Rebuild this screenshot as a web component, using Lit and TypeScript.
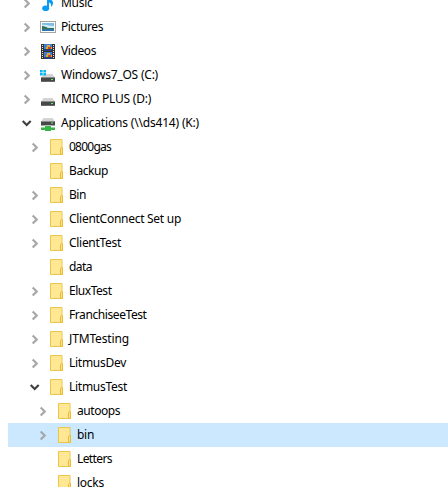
import { LitElement, html, css, svg, nothing } from "lit";
import { customElement, property } from "lit/decorators.js";
import { classMap } from "lit/directives/class-map.js";

type Kind = "music" | "pictures" | "videos" | "system" | "drive" | "network" | "folder";
interface Item {
  label: string;
  kind: Kind;
  depth: number;
  state: "closed" | "open" | "leaf";
  width: number;
  selected?: boolean;
}

const item = (label: string, width: number, depth = 1, state: Item["state"] = "closed", kind: Kind = "folder", selected = false): Item =>
  ({ label, width, depth, state, kind, selected });

const ITEMS: Item[] = [
  item("Music", 31.5, 0, "closed", "music"),
  item("Pictures", 42, 0, "closed", "pictures"),
  item("Videos", 35, 0, "closed", "videos"),
  item("Windows7_OS (C:)", 97, 0, "closed", "system"),
  item("MICRO PLUS (D:)", 90, 0, "closed", "drive"),
  item("Applications (\\\\ds414) (K:)", 138, 0, "open", "network"),
  item("0800gas", 42),
  item("Backup", 39, 1, "leaf"),
  item("Bin", 17),
  item("ClientConnect Set up", 112),
  item("ClientTest", 52),
  item("data", 23, 1, "leaf"),
  item("EluxTest", 42.5),
  item("FranchiseeTest", 77.5),
  item("JTMTesting", 60),
  item("LitmusDev", 57),
  item("LitmusTest", 58, 1, "open"),
  item("autoops", 43, 2),
  item("bin", 17, 2, "closed", "folder", true),
  item("Letters", 35, 2, "leaf"),
  item("locks", 27, 2, "leaf"),
];

const FONT = '12px "Noto Sans"';
const pen = document.createElement("canvas").getContext("2d")!;

// Letter spacing that brings a label to its column width.
function tracking(label: string, width: number): number {
  pen.font = FONT;
  return (width - pen.measureText(label).width) / label.length;
}

const drive = svg`
  <path d="M3.500 7h9L15 11H1z" fill="#d4d4d4"/>
  <path d="M1 10.500h14v4.500H1z" fill="#484848"/>
  <path d="M1 10h14v1H1z" fill="#8b8b8b"/>
  <path d="M1 14h14v1H1z" fill="#6b6b6b"/>
  <path d="M11 12h2v1h-2z" fill="#5df07b"/>`;

const ICONS: Record<Kind, unknown> = {
  music: svg`
    <path d="M7 1h2c0 3 4.500 4 4 7.500c-.2 1.500-1 2.500-2 3.500c.5-3-.5-4-2-4.500V13H7z" fill="#0a9cf5"/>
    <ellipse cx="5.700" cy="13.200" rx="3.500" ry="2.800" fill="#0a9cf5"/>`,
  pictures: svg`
    <path d="M0 2h16v12H0z" fill="#a5a5a5"/><path d="M1 3h14v10H1z" fill="#fff"/>
    <path d="M2 4h12v8H2z" fill="#7dbce8"/><path d="M2 6c4-1 7 1 12 1v2H2z" fill="#d4edf5"/>
    <path d="M2 7c3 0 4 1 6 2h6v1H2z" fill="#34705c"/><path d="M2 10h12v2H2z" fill="#2c78a5"/>`,
  videos: svg`
    <path d="M1 1h14v15H1z" fill="#333"/>
    <path d="M4 1h8v7H4zM4 9h8v7H4z" fill="#3f7fd6"/>
    <path d="M7 2h3v2h2v2H6V4h1zM7 10h3v2h2v2H6v-2h1z" fill="#e5aa2b"/>
    <path d="M8 4h3v2H8zM8 12h3v2H8z" fill="#c84334"/>
    <path d="M4 6h8v2H4zM4 14h8v2H4z" fill="#264574"/>
    <path d="M2.500 2v14M13.500 2v14" stroke="#e5e5e5" stroke-width="1" stroke-dasharray="1 1"/>`,
  system: svg`
    ${drive}
    <path d="M0 3h2.700v2.400H0zM3.400 3H6v2.400H3.400zM0 6h2.700v2.400H0zM3.400 6H6v2.400H3.400z" fill="#08b8ed"/>`,
  drive,
  network: svg`
    <path d="M3.500 3h9L15 6.500H1z" fill="#d4d4d4"/><path d="M1 6h14v4.500H1z" fill="#484848"/>
    <path d="M1 6h14v1H1z" fill="#8b8b8b"/><path d="M11 7.500h2v1h-2z" fill="#5df07b"/>
    <path d="M5 10h6v1.500H5z" fill="#b8c5b8"/><path d="M5 11h6v1.500h4v2.500h-4v1H5v-1H1v-2.500h4z" fill="#39b449"/>`,
  folder: svg`
    <path d="M2.500 .5h11.500v15H2.500z" fill="#ffe793" stroke="#eac64c"/>
    <path d="M12.500 15.500V9.500l.8-.9h1.200v6.900z" fill="#ffe184" stroke="#e6bb36"/>`,
};

@customElement("tree-row")
class TreeRow extends LitElement {
  @property({ attribute: false }) item!: Item;

  static styles = css`
    :host { display: block; height: 24px; flex: none; }
    .row { display: flex; align-items: center; gap: 5px; height: 24px; padding-left: 11px; }
    .depth1 { padding-left: 19px; }
    .depth2 { padding-left: 27px; }
    .selected { background: #cce8ff; }
    svg { width: 16px; height: 16px; flex: none; display: block; }
    .arrow { fill: none; stroke: #a6a6a6; stroke-width: 2.2; }
    .arrow.open { stroke: #404040; }
    .icon { overflow: visible; }
    .label { font: 12px/24px "Noto Sans", sans-serif; color: #000; white-space: pre; }
  `;

  render() {
    const { label, kind, depth, state, width, selected } = this.item;
    return html`<div class=${classMap({ row: true, depth1: depth === 1, depth2: depth === 2, selected: !!selected })}>
      <svg class=${classMap({ arrow: true, open: state === "open" })} viewBox="0 0 16 16">
        ${state === "leaf" ? nothing : state === "open"
          ? svg`<path d="M3.700 6l4 4l4-4"/>`
          : svg`<path d="M5.700 4.500l4 4l-4 4"/>`}
      </svg>
      <svg class="icon" viewBox="0 0 16 16">${ICONS[kind]}</svg>
      <span class="label" style="letter-spacing:${tracking(label, width).toFixed(3)}px">${label}</span>
    </div>`;
  }
}

@customElement("app-root")
class AppRoot extends LitElement {
  static styles = css`
    :host { display: block; height: 487px; overflow: hidden; background: #fff; }
    .tree { display: flex; flex-direction: column; margin: -9px 0 0 8px; }
  `;

  render() {
    return html`<div class="tree">${ITEMS.map((entry) => html`<tree-row .item=${entry}></tree-row>`)}</div>`;
  }
}
